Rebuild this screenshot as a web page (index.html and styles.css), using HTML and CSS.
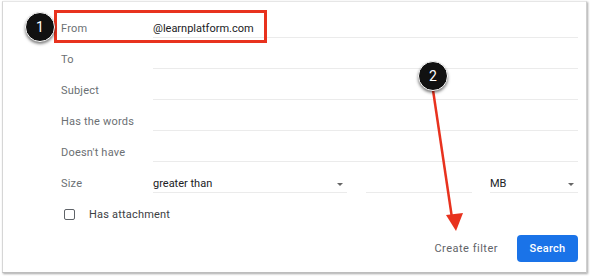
FILE: index.html
```html
<!DOCTYPE html>
<html>
<head>
<meta charset="utf-8">
<link rel="stylesheet" href="styles.css">
</head>
<body>
<div class="stage">
  <div class="panel">
    <div class="row">
      <div class="label">From</div>
      <div class="field"><span class="value">@learnplatform.com</span></div>
    </div>
    <div class="row">
      <div class="label">To</div>
      <div class="field"></div>
    </div>
    <div class="row">
      <div class="label">Subject</div>
      <div class="field"></div>
    </div>
    <div class="row">
      <div class="label">Has the words</div>
      <div class="field"></div>
    </div>
    <div class="row">
      <div class="label">Doesn't have</div>
      <div class="field"></div>
    </div>
    <div class="row">
      <div class="label">Size</div>
      <div class="sizegroup">
        <div class="field select sel-cmp"><span class="value">greater than</span><span class="caret"></span></div>
        <div class="field num"></div>
        <div class="field select sel-unit"><span class="value">MB</span><span class="caret"></span></div>
      </div>
    </div>
    <div class="checkrow">
      <span class="checkbox"></span>
      <span class="checklabel">Has attachment</span>
    </div>
    <div class="actions">
      <span class="create">Create filter</span>
      <span class="search">Search</span>
    </div>
  </div>

  <div class="highlight"></div>
  <div class="badge badge1">1</div>
  <svg class="arrow" width="590" height="277" viewBox="0 0 590 277">
    <line x1="433" y1="90" x2="452" y2="218" stroke="#e8321e" stroke-width="2.5"/>
    <polygon points="446,215 463,213 456,231" fill="#e8321e"/>
  </svg>
  <div class="badge badge2">2</div>
</div>
</body>
</html>
```
FILE: styles.css
```css
html, body {
  margin: 0;
  padding: 0;
  background: #ffffff;
}
body {
  font-family: Roboto, "Liberation Sans", Arial, sans-serif;
  font-size: 11px;
}
.stage {
  position: relative;
  width: 590px;
  height: 277px;
  overflow: hidden;
}
.panel {
  margin-left: 2px;
  margin-top: 1px;
  width: 585px;
  height: 272px;
  box-sizing: border-box;
  border-left: 1px solid #d6d6d6;
  border-top: 1px solid #e6e6e6;
  border-right: 1px solid #cfcfcf;
  border-bottom: 1px solid #bdbdbd;
  box-shadow: 1px 1px 2px rgba(0,0,0,0.35);
  padding: 5px 8px 0 58px;
  background: #fff;
}
.row {
  display: flex;
  align-items: flex-end;
  height: 31px;
}
.label {
  width: 92px;
  flex: none;
  color: #6b6f73;
  line-height: 16px;
  padding-bottom: 1px;
  letter-spacing: 0.2px;
}
.field {
  flex: 1;
  height: 17px;
  line-height: 16px;
  border-bottom: 1px solid #ebebeb;
  box-sizing: border-box;
  color: #202124;
  position: relative;
}
.sizegroup {
  flex: 1;
  display: flex;
  align-items: flex-end;
}
.sel-cmp { flex: none; width: 194px; }
.num { flex: none; width: 106px; margin-left: 19px; }
.sel-unit { flex: none; width: 88px; margin-left: 18px; }
.caret {
  position: absolute;
  right: 4px;
  top: 7px;
  width: 0;
  height: 0;
  border-left: 3.5px solid transparent;
  border-right: 3.5px solid transparent;
  border-top: 3.5px solid #666;
}
.checkrow {
  display: flex;
  align-items: center;
  height: 20px;
  margin-top: 11px;
  padding-left: 3px;
}
.checkbox {
  width: 11px;
  height: 11px;
  box-sizing: border-box;
  border: 1.5px solid #5f6368;
  border-radius: 2px;
  margin-right: 14px;
}
.checklabel {
  color: #3c4043;
  letter-spacing: 0.2px;
}
.actions {
  display: flex;
  justify-content: flex-end;
  align-items: center;
  margin-top: 11px;
}
.create {
  color: #5f6368;
  margin-right: 19px;
  letter-spacing: 0.5px;
}
.search {
  display: inline-flex;
  align-items: center;
  justify-content: center;
  width: 61px;
  height: 27px;
  background: #1a73e8;
  color: #fff;
  border-radius: 4px;
  font-weight: 500;
  letter-spacing: 0.3px;
}
.highlight {
  position: absolute;
  left: 54px;
  top: 10px;
  width: 213px;
  height: 33px;
  box-sizing: border-box;
  border: 3px solid #e8321e;
}
.badge {
  position: absolute;
  width: 28px;
  height: 28px;
  border-radius: 50%;
  background: #111;
  border: 1.5px solid #fff;
  box-shadow: 0 2px 3px rgba(0,0,0,0.5);
  color: #fff;
  font-size: 14px;
  display: flex;
  align-items: center;
  justify-content: center;
}
.badge1 { left: 25px; top: 12px; }
.badge2 { left: 418px; top: 61px; }
.arrow {
  position: absolute;
  left: 0;
  top: 0;
}
```
